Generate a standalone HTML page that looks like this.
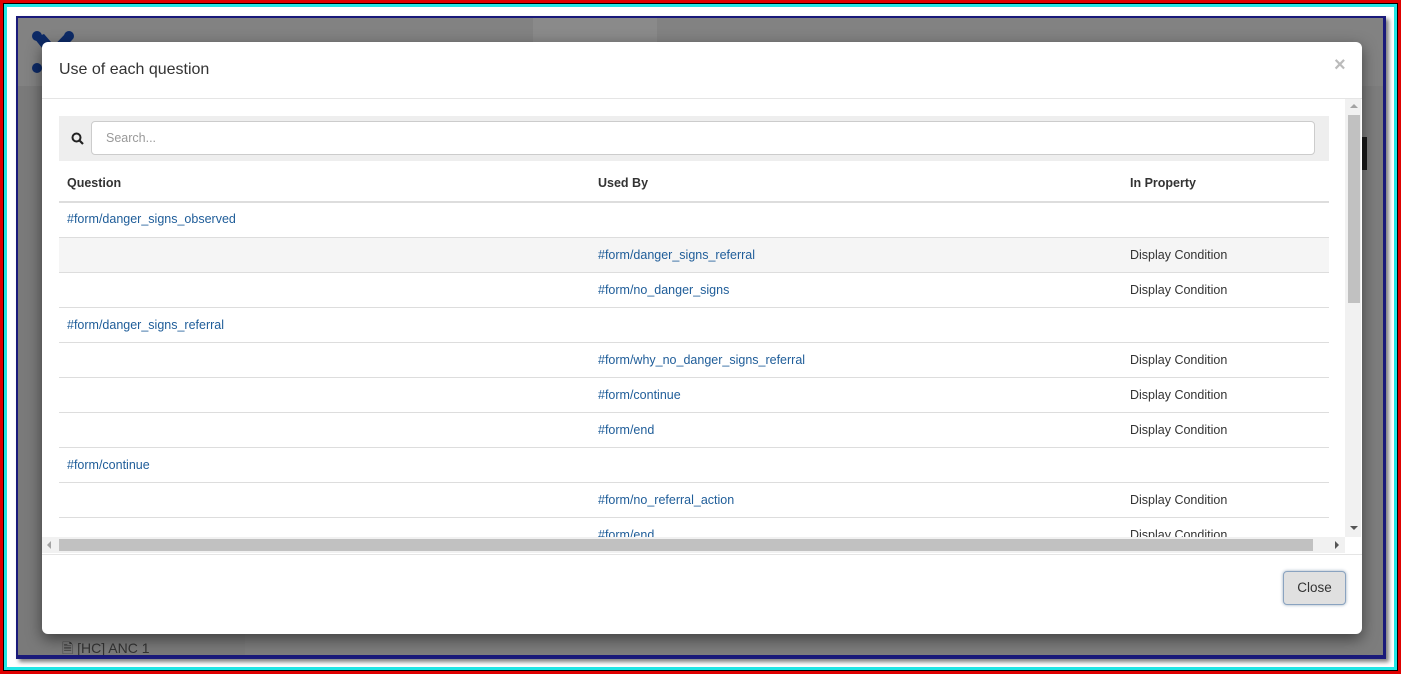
<!DOCTYPE html>
<html><head><meta charset="utf-8"><style>
*{box-sizing:border-box;margin:0;padding:0}
body{width:1401px;height:674px;overflow:hidden;background:#fff;font-family:"Liberation Sans",Arial,sans-serif;position:relative}
.abs{position:absolute}
a{color:#1f5d99;text-decoration:none}
.row{position:absolute;left:59px;width:1270px;height:35px;border-top:1px solid #ddd;font-size:12.5px;color:#333}
.row span{position:absolute;top:10px}
</style></head><body>
<div class="abs" style="left:0;top:0;width:1401px;height:674px;border:3px solid #e00000;"></div>
<div class="abs" style="left:3px;top:3px;width:1395px;height:668px;border:1px solid #000;"></div>
<div class="abs" style="left:4px;top:4px;width:1393px;height:666px;border:3px solid #22e5e5;"></div>
<div class="abs" style="left:16px;top:16px;width:1370px;height:643px;background:#1a1a7a;box-shadow:3px 3px 4px rgba(0,0,0,.5)"></div>
<div class="abs" style="left:18px;top:18px;width:1365px;height:637px;background:#7d7d7d;overflow:hidden">
  <div class="abs" style="left:0;top:0;width:1365px;height:68px;background:#828282"></div>
  <div class="abs" style="left:515px;top:0;width:124px;height:68px;background:#8a8a8a"></div>
  <div class="abs" style="left:0;top:68px;width:227px;height:569px;background:#7a7a7a"></div>
  <div class="abs" style="left:1344px;top:119px;width:5px;height:33px;background:#1a1a1a"></div>
  <svg class="abs" style="left:12px;top:12px" width="48" height="48"><g fill="#0d2a66"><circle cx="7" cy="6" r="5"/><circle cx="39" cy="6" r="5"/><circle cx="7" cy="38" r="5"/><path d="M4 8 L14 4 L28 20 L20 28 Z"/><path d="M36 3 L42 10 L20 34 L12 28 Z"/></g></svg>
  <div class="abs" style="left:44px;top:620px;font-size:14px;color:#333">&#128462; [HC] ANC 1</div>
</div>
<div class="abs" style="left:42px;top:42px;width:1320px;height:592px;background:#fff;border-radius:6px;box-shadow:0 5px 15px rgba(0,0,0,.5);overflow:hidden">
  <div class="abs" style="left:17px;top:19px;font-size:16px;color:#333">Use of each question</div>
  <div class="abs" style="left:1292px;top:12px;font-size:20px;color:#bbb;font-weight:bold">×</div>
  <div class="abs" style="left:0;top:56px;width:1320px;height:1px;background:#e5e5e5"></div>
  <div class="abs" style="left:17px;top:74px;width:1270px;height:45px;background:#eee"></div>
  <svg class="abs" style="left:29px;top:90px" width="13" height="13"><circle cx="5.5" cy="5.5" r="4" fill="none" stroke="#222" stroke-width="2"/><path d="M8.5 8.5 L12 12" stroke="#222" stroke-width="2.2"/></svg>
  <div class="abs" style="left:49px;top:79px;width:1224px;height:34px;background:#fff;border:1px solid #ccc;border-radius:4px;font-size:12.5px;color:#999;padding:9px 0 0 14px">Search...</div>
  <div class="abs" style="left:25px;top:134px;font-size:12.5px;font-weight:bold;color:#333">Question</div>
  <div class="abs" style="left:556px;top:134px;font-size:12.5px;font-weight:bold;color:#333">Used By</div>
  <div class="abs" style="left:1088px;top:134px;font-size:12.5px;font-weight:bold;color:#333">In Property</div>
  <div class="abs" style="left:17px;top:159px;width:1270px;height:2px;background:#ddd"></div>
</div>
<div class="abs" style="left:0;top:0;width:1345px;height:537px;overflow:hidden">
  <div class="row" style="top:202px;border-top:none"><span style="left:8px"><a>#form/danger_signs_observed</a></span></div>
  <div class="row" style="top:237px;background:#f5f5f5"><span style="left:539px"><a>#form/danger_signs_referral</a></span><span style="left:1071px">Display Condition</span></div>
  <div class="row" style="top:272px"><span style="left:539px"><a>#form/no_danger_signs</a></span><span style="left:1071px">Display Condition</span></div>
  <div class="row" style="top:307px"><span style="left:8px"><a>#form/danger_signs_referral</a></span></div>
  <div class="row" style="top:342px"><span style="left:539px"><a>#form/why_no_danger_signs_referral</a></span><span style="left:1071px">Display Condition</span></div>
  <div class="row" style="top:377px"><span style="left:539px"><a>#form/continue</a></span><span style="left:1071px">Display Condition</span></div>
  <div class="row" style="top:412px"><span style="left:539px"><a>#form/end</a></span><span style="left:1071px">Display Condition</span></div>
  <div class="row" style="top:447px"><span style="left:8px"><a>#form/continue</a></span></div>
  <div class="row" style="top:482px"><span style="left:539px"><a>#form/no_referral_action</a></span><span style="left:1071px">Display Condition</span></div>
  <div class="row" style="top:517px"><span style="left:539px"><a>#form/end</a></span><span style="left:1071px">Display Condition</span></div>
</div>
<div class="abs" style="left:1345px;top:99px;width:16px;height:438px;background:#f1f1f1"></div>
<div class="abs" style="left:1348px;top:115px;width:12px;height:188px;background:#c1c1c1"></div>
<div class="abs" style="left:1350px;top:104px;width:0;height:0;border:4px solid transparent;border-bottom-color:#a3a3a3;border-top:none"></div>
<div class="abs" style="left:1350px;top:526px;width:0;height:0;border:4px solid transparent;border-top-color:#555;border-bottom:none"></div>
<div class="abs" style="left:42px;top:537px;width:1303px;height:16px;background:#f1f1f1"></div>
<div class="abs" style="left:59px;top:539px;width:1254px;height:12px;background:#c1c1c1"></div>
<div class="abs" style="left:47px;top:541px;width:0;height:0;border:4px solid transparent;border-right-color:#a3a3a3;border-left:none"></div>
<div class="abs" style="left:1335px;top:541px;width:0;height:0;border:4px solid transparent;border-left-color:#555;border-right:none"></div>
<div class="abs" style="left:42px;top:554px;width:1320px;height:1px;background:#e5e5e5"></div>
<div class="abs" style="left:1283px;top:571px;width:63px;height:34px;background:#e0e0e0;border:1px solid #8aa3c0;border-radius:4px;box-shadow:0 0 3px #9ab;font-size:13.5px;color:#333;text-align:center;padding-top:8px">Close</div>
</body></html>
